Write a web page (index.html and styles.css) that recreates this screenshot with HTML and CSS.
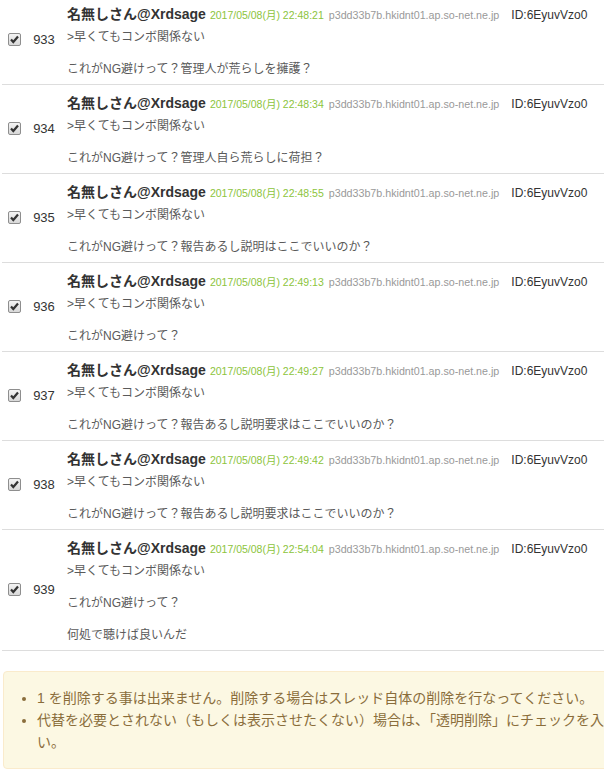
FILE: index.html
```html
<!DOCTYPE html>
<html lang="ja">
<head>
    <meta charset="UTF-8">
    <meta name="viewport" content="width=device-width, initial-scale=1.0">
    <title>レス削除</title>
    <link rel="stylesheet" href="styles.css">
</head>
<body>
    <div class="wrap">
        <div class="res-list">
            <div class="res">
                <span class="check"><svg width="13" height="13" viewBox="0 0 13 13"><path d="M3 6.5 L5.3 9 L10 3.5" fill="none" stroke="#333" stroke-width="2.2"/></svg></span>
                <span class="num">933</span>
                <div class="body">
                    <div class="head"><span class="name">名無しさん@Xrdsage</span><span class="date">2017/05/08(月) 22:48:21</span><span class="host">p3dd33b7b.hkidnt01.ap.so-net.ne.jp</span><span class="id">ID:6EyuvVzo0</span></div>
                    <div class="msg">&gt;早くてもコンボ関係ない<br><br>これがNG避けって？管理人が荒らしを擁護？</div>
                </div>
            </div>
            <div class="res">
                <span class="check"><svg width="13" height="13" viewBox="0 0 13 13"><path d="M3 6.5 L5.3 9 L10 3.5" fill="none" stroke="#333" stroke-width="2.2"/></svg></span>
                <span class="num">934</span>
                <div class="body">
                    <div class="head"><span class="name">名無しさん@Xrdsage</span><span class="date">2017/05/08(月) 22:48:34</span><span class="host">p3dd33b7b.hkidnt01.ap.so-net.ne.jp</span><span class="id">ID:6EyuvVzo0</span></div>
                    <div class="msg">&gt;早くてもコンボ関係ない<br><br>これがNG避けって？管理人自ら荒らしに荷担？</div>
                </div>
            </div>
            <div class="res">
                <span class="check"><svg width="13" height="13" viewBox="0 0 13 13"><path d="M3 6.5 L5.3 9 L10 3.5" fill="none" stroke="#333" stroke-width="2.2"/></svg></span>
                <span class="num">935</span>
                <div class="body">
                    <div class="head"><span class="name">名無しさん@Xrdsage</span><span class="date">2017/05/08(月) 22:48:55</span><span class="host">p3dd33b7b.hkidnt01.ap.so-net.ne.jp</span><span class="id">ID:6EyuvVzo0</span></div>
                    <div class="msg">&gt;早くてもコンボ関係ない<br><br>これがNG避けって？報告あるし説明はここでいいのか？</div>
                </div>
            </div>
            <div class="res">
                <span class="check"><svg width="13" height="13" viewBox="0 0 13 13"><path d="M3 6.5 L5.3 9 L10 3.5" fill="none" stroke="#333" stroke-width="2.2"/></svg></span>
                <span class="num">936</span>
                <div class="body">
                    <div class="head"><span class="name">名無しさん@Xrdsage</span><span class="date">2017/05/08(月) 22:49:13</span><span class="host">p3dd33b7b.hkidnt01.ap.so-net.ne.jp</span><span class="id">ID:6EyuvVzo0</span></div>
                    <div class="msg">&gt;早くてもコンボ関係ない<br><br>これがNG避けって？</div>
                </div>
            </div>
            <div class="res">
                <span class="check"><svg width="13" height="13" viewBox="0 0 13 13"><path d="M3 6.5 L5.3 9 L10 3.5" fill="none" stroke="#333" stroke-width="2.2"/></svg></span>
                <span class="num">937</span>
                <div class="body">
                    <div class="head"><span class="name">名無しさん@Xrdsage</span><span class="date">2017/05/08(月) 22:49:27</span><span class="host">p3dd33b7b.hkidnt01.ap.so-net.ne.jp</span><span class="id">ID:6EyuvVzo0</span></div>
                    <div class="msg">&gt;早くてもコンボ関係ない<br><br>これがNG避けって？報告あるし説明要求はここでいいのか？</div>
                </div>
            </div>
            <div class="res">
                <span class="check"><svg width="13" height="13" viewBox="0 0 13 13"><path d="M3 6.5 L5.3 9 L10 3.5" fill="none" stroke="#333" stroke-width="2.2"/></svg></span>
                <span class="num">938</span>
                <div class="body">
                    <div class="head"><span class="name">名無しさん@Xrdsage</span><span class="date">2017/05/08(月) 22:49:42</span><span class="host">p3dd33b7b.hkidnt01.ap.so-net.ne.jp</span><span class="id">ID:6EyuvVzo0</span></div>
                    <div class="msg">&gt;早くてもコンボ関係ない<br><br>これがNG避けって？報告あるし説明要求はここでいいのか？</div>
                </div>
            </div>
            <div class="res">
                <span class="check"><svg width="13" height="13" viewBox="0 0 13 13"><path d="M3 6.5 L5.3 9 L10 3.5" fill="none" stroke="#333" stroke-width="2.2"/></svg></span>
                <span class="num">939</span>
                <div class="body">
                    <div class="head"><span class="name">名無しさん@Xrdsage</span><span class="date">2017/05/08(月) 22:54:04</span><span class="host">p3dd33b7b.hkidnt01.ap.so-net.ne.jp</span><span class="id">ID:6EyuvVzo0</span></div>
                    <div class="msg">&gt;早くてもコンボ関係ない<br><br>これがNG避けって？<br><br>何処で聴けば良いんだ</div>
                </div>
            </div>
        </div>

        <div class="notice">
            <ul>
                <li>1 を削除する事は出来ません。削除する場合はスレッド自体の削除を行なってください。</li>
                <li>代替を必要とされない（もしくは表示させたくない）場合は、「透明削除」にチェックを入れてください。</li>
            </ul>
        </div>
    </div>
</body>
</html>
```

FILE: styles.css
```css
body {
    font-family: "Liberation Sans", "Noto Sans CJK JP", sans-serif;
    color: #333;
    background: #fff;
    margin: 0;
    overflow: hidden;
}

.wrap {
    width: 702px;
    margin-left: 2px;
}

.res-list {
    margin-top: -4px;
}

.res {
    display: grid;
    grid-template-columns: 24px 36px 1fr;
    align-items: center;
    border-bottom: 1px solid #ddd;
}

.check {
    justify-self: center;
    width: 11px;
    height: 11px;
    border: 1px solid #8e8e8e;
    border-radius: 2px;
    background: linear-gradient(#f4f4f4, #d8d8d8);
    display: flex;
    align-items: center;
    justify-content: center;
    margin-top: -1px;
}

.check svg {
    display: block;
    flex: none;
}

.num {
    text-align: center;
    font-size: 13px;
    line-height: 16px;
    color: #333;
}

.body {
    padding: 8px 5px 7px;
}

.head {
    display: flex;
    align-items: baseline;
    height: 20px;
    white-space: nowrap;
}

.head span {
    line-height: 20px;
}

.name {
    font-size: 14px;
    font-weight: bold;
    color: #333;
}

.date {
    font-size: 10.5px;
    color: #8cc43c;
    margin-left: 4px;
}

.host {
    font-size: 10.7px;
    color: #999;
    margin-left: 5px;
}

.id {
    font-size: 12px;
    color: #333;
    margin-left: 12px;
}

.msg {
    margin-top: 5px;
    font-size: 12px;
    line-height: 16px;
    color: #5a5a5a;
}

.notice {
    margin: 20px 0 0 1px;
    padding: 15px;
    background: #fcf8e3;
    border: 1px solid #faebcc;
    border-radius: 4px;
    color: #8a6d3b;
    font-size: 14px;
    line-height: 22px;
}

.notice ul {
    margin: 0;
    padding-left: 18px;
    width: 650px;
}
```
